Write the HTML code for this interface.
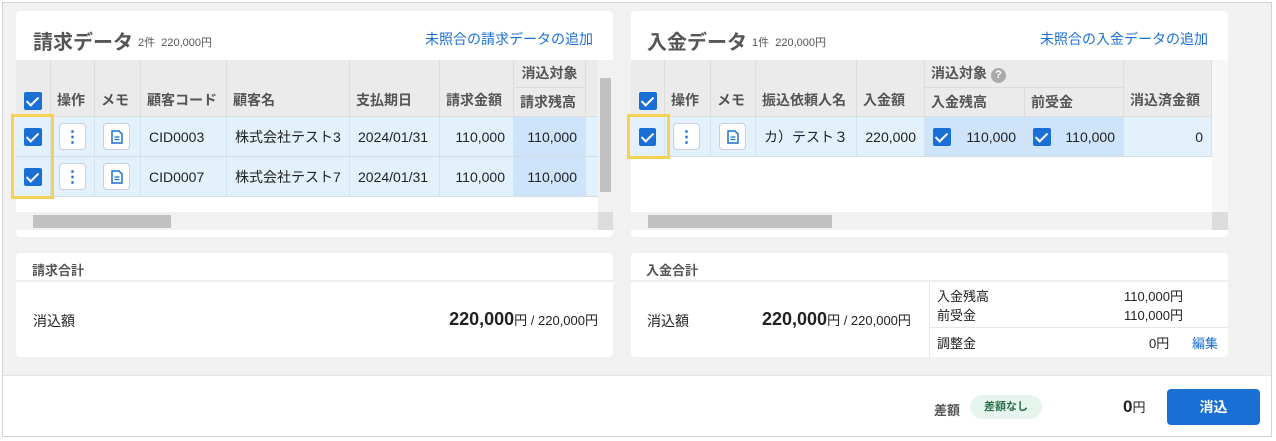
<!DOCTYPE html>
<html><head><meta charset="utf-8"><style>
*{box-sizing:border-box;margin:0;padding:0}
body{width:1276px;height:441px;background:#fff;font-family:"Liberation Sans","Noto Sans CJK JP",sans-serif;color:#222;position:relative;overflow:hidden}
.frame{position:absolute;left:2px;top:2px;width:1270px;height:435px;border:1px solid #d4d4d4;background:#f1f1f2}
.card{position:absolute;background:#fff;border-radius:4px;overflow:hidden}
.abs{position:absolute}
.title{font-size:20px;font-weight:bold;color:#555}
.sub{font-size:11px;color:#555}
.link{font-size:14px;color:#1a6fd4}
.th{position:absolute;background:#ebebeb;border-right:1px solid #ddd;border-bottom:1px solid #ddd;font-size:14px;font-weight:bold;color:#555;padding:0 6px;display:flex;align-items:flex-end;padding-bottom:6px}
.td{position:absolute;background:#e3f1fd;border-right:1px solid #d6e3ee;border-bottom:1px solid #d0dbe5;font-size:14px;color:#222;display:flex;align-items:center;padding:0 8px}
.hl{background:#cde4fb}
.cb{width:18px;height:18px;background:#1a6fd4;border-radius:2px;position:relative;display:inline-block}
.cb:after{content:"";position:absolute;left:5px;top:2px;width:5px;height:10px;border:solid #fff;border-width:0 2px 2px 0;transform:rotate(45deg)}
.btn{width:27px;height:27px;background:#fff;border:1px solid #ccd;border-radius:4px;display:flex;align-items:center;justify-content:center}
.yel{position:absolute;border:3px solid #f7d154}
.sh{position:absolute;left:0;top:0;width:597px;height:29px;border-bottom:2px solid #eee;font-size:13px;font-weight:bold;color:#555;padding:7px 0 0 16px}
</style></head><body>
<div class="frame"></div>

<div class="card" style="left:16px;top:11px;width:597px;height:226px">
 <div class="abs title" style="left:17px;top:15px">請求データ</div>
 <div class="abs sub" style="left:122px;top:23px">2件&nbsp; 220,000円</div>
 <div class="abs link" style="left:409px;top:18px">未照合の請求データの追加</div>
 <div class="th" style="left:0;top:49px;width:35px;height:57px;padding-left:8px"><span class="cb"></span></div>
 <div class="th" style="left:35px;top:49px;width:44px;height:57px">操作</div>
 <div class="th" style="left:79px;top:49px;width:46px;height:57px">メモ</div>
 <div class="th" style="left:125px;top:49px;width:86px;height:57px">顧客コード</div>
 <div class="th" style="left:211px;top:49px;width:123px;height:57px">顧客名</div>
 <div class="th" style="left:334px;top:49px;width:90px;height:57px">支払期日</div>
 <div class="th" style="left:424px;top:49px;width:74px;height:57px">請求金額</div>
 <div class="th" style="left:498px;top:49px;width:72px;height:28px;justify-content:center;padding-bottom:4px">消込対象</div>
 <div class="th" style="left:498px;top:77px;width:72px;height:29px;padding-bottom:4px">請求残高</div>
 <div class="th" style="left:570px;top:49px;width:12px;height:57px"></div>
 <div class="td" style="left:0;top:106px;width:35px;height:40px"><span class="cb"></span></div>
 <div class="td" style="left:35px;top:106px;width:44px;height:40px"><div class="btn" style="color:#1a6fd4;font-weight:bold;font-size:16px">⋮</div></div>
 <div class="td" style="left:79px;top:106px;width:46px;height:40px"><div class="btn"><svg width="12" height="14" viewBox="0 0 12 14"><path d="M1 1h7l3 3v9H1z" fill="none" stroke="#1a6fd4" stroke-width="1.5"/><path d="M3.5 7h5M3.5 9.5h5" stroke="#1a6fd4" stroke-width="1.3"/></svg></div></div>
 <div class="td" style="left:125px;top:106px;width:86px;height:40px">CID0003</div>
 <div class="td" style="left:211px;top:106px;width:123px;height:40px">株式会社テスト3</div>
 <div class="td" style="left:334px;top:106px;width:90px;height:40px">2024/01/31</div>
 <div class="td" style="left:424px;top:106px;width:74px;height:40px;justify-content:flex-end">110,000</div>
 <div class="td hl" style="left:498px;top:106px;width:72px;height:40px;justify-content:flex-end">110,000</div>
 <div class="td" style="left:570px;top:106px;width:12px;height:40px"></div>
 <div class="td" style="left:0;top:146px;width:35px;height:40px"><span class="cb"></span></div>
 <div class="td" style="left:35px;top:146px;width:44px;height:40px"><div class="btn" style="color:#1a6fd4;font-weight:bold;font-size:16px">⋮</div></div>
 <div class="td" style="left:79px;top:146px;width:46px;height:40px"><div class="btn"><svg width="12" height="14" viewBox="0 0 12 14"><path d="M1 1h7l3 3v9H1z" fill="none" stroke="#1a6fd4" stroke-width="1.5"/><path d="M3.5 7h5M3.5 9.5h5" stroke="#1a6fd4" stroke-width="1.3"/></svg></div></div>
 <div class="td" style="left:125px;top:146px;width:86px;height:40px">CID0007</div>
 <div class="td" style="left:211px;top:146px;width:123px;height:40px">株式会社テスト7</div>
 <div class="td" style="left:334px;top:146px;width:90px;height:40px">2024/01/31</div>
 <div class="td" style="left:424px;top:146px;width:74px;height:40px;justify-content:flex-end">110,000</div>
 <div class="td hl" style="left:498px;top:146px;width:72px;height:40px;justify-content:flex-end">110,000</div>
 <div class="td" style="left:570px;top:146px;width:12px;height:40px"></div>
 <div class="abs" style="left:582px;top:49px;width:15px;height:152px;background:#f1f1f1"></div>
 <div class="abs" style="left:584px;top:67px;width:11px;height:114px;background:#c1c1c1"></div>
 <div class="abs" style="left:0;top:201px;width:582px;height:18px;background:#f1f1f1"></div>
 <div class="abs" style="left:17px;top:204px;width:138px;height:13px;background:#c1c1c1"></div>
 <div class="abs" style="left:582px;top:201px;width:15px;height:18px;background:#dcdcdc"></div>
</div>
<div class="yel" style="left:11px;top:114px;width:43px;height:85px"></div>

<div class="card" style="left:631px;top:11px;width:597px;height:226px">
 <div class="abs title" style="left:16px;top:15px">入金データ</div>
 <div class="abs sub" style="left:121px;top:23px">1件&nbsp; 220,000円</div>
 <div class="abs link" style="left:409px;top:18px">未照合の入金データの追加</div>
 <div class="th" style="left:0;top:49px;width:34px;height:57px;padding-left:8px"><span class="cb"></span></div>
 <div class="th" style="left:34px;top:49px;width:46px;height:57px">操作</div>
 <div class="th" style="left:80px;top:49px;width:45px;height:57px">メモ</div>
 <div class="th" style="left:125px;top:49px;width:101px;height:57px">振込依頼人名</div>
 <div class="th" style="left:226px;top:49px;width:68px;height:57px">入金額</div>
 <div class="th" style="left:294px;top:49px;width:199px;height:28px;padding-bottom:4px">消込対象 <span style="display:inline-block;width:15px;height:15px;border-radius:50%;background:#aaa;color:#fff;font-size:11px;text-align:center;line-height:15px;margin-left:4px">?</span></div>
 <div class="th" style="left:294px;top:77px;width:100px;height:29px;padding-bottom:4px">入金残高</div>
 <div class="th" style="left:394px;top:77px;width:99px;height:29px;padding-bottom:4px">前受金</div>
 <div class="th" style="left:493px;top:49px;width:88px;height:57px">消込済金額</div>
 <div class="td" style="left:0;top:106px;width:34px;height:40px"><span class="cb"></span></div>
 <div class="td" style="left:34px;top:106px;width:46px;height:40px"><div class="btn" style="color:#1a6fd4;font-weight:bold;font-size:16px">⋮</div></div>
 <div class="td" style="left:80px;top:106px;width:45px;height:40px"><div class="btn"><svg width="12" height="14" viewBox="0 0 12 14"><path d="M1 1h7l3 3v9H1z" fill="none" stroke="#1a6fd4" stroke-width="1.5"/><path d="M3.5 7h5M3.5 9.5h5" stroke="#1a6fd4" stroke-width="1.3"/></svg></div></div>
 <div class="td" style="left:125px;top:106px;width:101px;height:40px">カ）テスト３</div>
 <div class="td" style="left:226px;top:106px;width:68px;height:40px;justify-content:flex-end">220,000</div>
 <div class="td hl" style="left:294px;top:106px;width:100px;height:40px;justify-content:space-between"><span class="cb"></span>110,000</div>
 <div class="td hl" style="left:394px;top:106px;width:99px;height:40px;justify-content:space-between"><span class="cb"></span>110,000</div>
 <div class="td" style="left:493px;top:106px;width:88px;height:40px;justify-content:flex-end">0</div>
 <div class="abs" style="left:581px;top:49px;width:16px;height:152px;background:#f7f7f7"></div>
 <div class="abs" style="left:0;top:201px;width:581px;height:18px;background:#f1f1f1"></div>
 <div class="abs" style="left:17px;top:204px;width:184px;height:13px;background:#c1c1c1"></div>
 <div class="abs" style="left:581px;top:201px;width:16px;height:18px;background:#dcdcdc"></div>
</div>
<div class="yel" style="left:627px;top:114px;width:43px;height:45px"></div>

<div class="card" style="left:16px;top:253px;width:597px;height:104px">
 <div class="sh">請求合計</div>
 <div class="abs" style="left:17px;top:58px;font-size:14px">消込額</div>
 <div class="abs" style="right:15px;top:56px;font-size:13px"><b style="font-size:18px">220,000</b>円 / 220,000円</div>
</div>
<div class="card" style="left:631px;top:253px;width:597px;height:104px">
 <div class="sh" style="padding-left:15px">入金合計</div>
 <div class="abs" style="left:16px;top:58px;font-size:14px">消込額</div>
 <div class="abs" style="left:131px;top:56px;font-size:13px"><b style="font-size:18px">220,000</b>円 / 220,000円</div>
 <div class="abs" style="left:298px;top:29px;width:1px;height:75px;background:#e6e6e6"></div>
 <div class="abs" style="left:298px;top:74px;width:299px;height:1px;background:#e6e6e6"></div>
 <div class="abs" style="left:306px;top:34px;font-size:13px;line-height:19px">入金残高<br>前受金</div>
 <div class="abs" style="left:480px;top:34px;font-size:13px;line-height:19px;text-align:right;width:72px">110,000円<br>110,000円</div>
 <div class="abs" style="left:306px;top:80px;font-size:13px">調整金</div>
 <div class="abs" style="left:518px;top:80px;font-size:13px">0円</div>
 <div class="abs" style="left:561px;top:80px;font-size:13px;color:#1a6fd4">編集</div>
</div>

<div class="abs" style="left:3px;top:375px;width:1268px;height:61px;background:#fff;border-top:1px solid #e4e4e4"></div>
<div class="abs" style="left:934px;top:400px;font-size:13px;font-weight:bold;color:#555">差額</div>
<div class="abs" style="left:970px;top:395px;width:72px;height:24px;border-radius:12px;background:#e6f6ef;color:#2a6e4a;font-size:11px;font-weight:bold;text-align:center;line-height:24px">差額なし</div>
<div class="abs" style="left:1123px;top:397px;font-size:13px"><b style="font-size:17px">0</b>円</div>
<div class="abs" style="left:1167px;top:389px;width:93px;height:36px;border-radius:4px;background:#1a6fd4;color:#fff;font-size:14px;font-weight:bold;text-align:center;line-height:36px">消込</div>
</body></html>
